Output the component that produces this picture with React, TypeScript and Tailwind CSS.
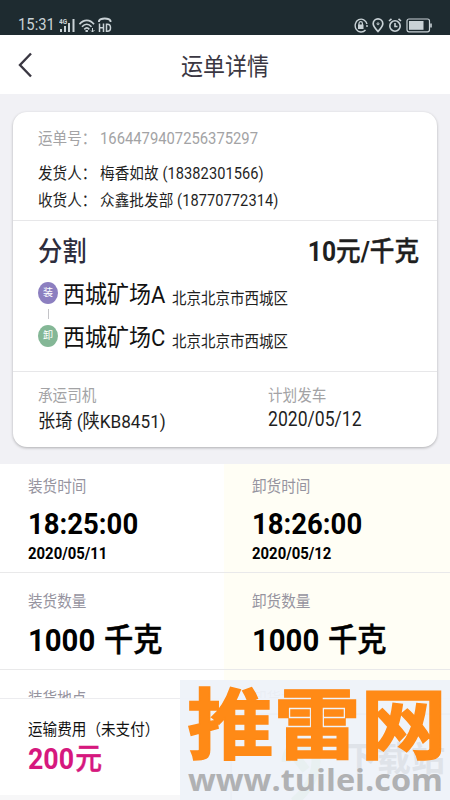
import { ReactNode } from 'react';
import clsx from 'clsx';

interface TextProps {
    className?: string;
    children: ReactNode;
}

// Text is a little taller than it is wide everywhere in this layout
const Text: React.FC<TextProps> = ({ className, children }) => (
    <span className={clsx('block origin-left scale-y-[1.1] whitespace-nowrap', className)}>
        {children}
    </span>
);

// Chinese units beside bold digits, lighter than the full bold face
const Unit: React.FC<{ children: string }> = ({ children }) => (
    <span className="font-medium [-webkit-text-stroke:0.4px_currentColor]">{children}</span>
);

interface StopProps {
    badge: string;
    badgeClass: string;
    name: string;
    address: string;
}

interface StatProps {
    label: string;
    children?: ReactNode;
    className?: string;
}

const StatusBar = () => (
    <div className="flex h-[35px] shrink-0 items-end justify-between bg-[#1e2b30] px-[18px] pb-px text-[#c9d2d6]">
        <div className="flex items-end">
            <Text className="w-[38px] text-[14.8px] leading-[17px]">15:31</Text>
            <svg className="ml-[3px]" width="17" height="16" viewBox="0 0 17 16" fill="currentColor">
                <text x="0" y="6" fontSize="6.5" fontWeight="700">4G</text>
                <rect x="1" y="11" width="2" height="3" />
                <rect x="5" y="8" width="2" height="6" />
                <rect x="9" y="5" width="2" height="9" />
                <rect x="13.5" y="1" width="2" height="13" />
            </svg>
            <svg className="ml-[2px]" width="18" height="16" viewBox="0 0 18 16" fill="none" stroke="currentColor" strokeWidth="1.7">
                <path d="M1.5 6.2C5.7 1 12 1 16 6.2" />
                <path d="M4 8.8c3-3.4 6.5-3.4 9.5 0" />
                <path d="M6.3 11.3c1.8-1.8 3.3-1.8 5 0" />
                <path d="M7.5 13h2.4" strokeWidth="2" />
                <path d="M14.5 10v4M13 12.5l1.5 1.5 2-2" strokeWidth="1" />
            </svg>
            <svg className="ml-[2px]" width="14" height="17" viewBox="0 0 14 17" fill="none" stroke="currentColor" strokeWidth="1.5">
                <path d="M1 5V3.8C2.5 .8 11 .8 12.5 3.8V5" strokeWidth="1.9" />
                <path d="M1.5 6.5v8.500M5.5 6.5v8.500M1.5 10.8h4M8.5 7.2v7.100h1c4 0 4-7.100 0-7.100z" />
            </svg>
        </div>
        <div className="flex items-end gap-[4px]">
            <svg width="14" height="17" viewBox="0 0 14 17" fill="none" stroke="currentColor" strokeWidth="1.4">
                <path d="M11.5 13A6 6.4 0 1 1 13 7M13 8v2" />
                <rect x="4" y="7.5" width="5.5" height="4.5" fill="currentColor" stroke="none" />
                <path d="M5 8V6.5a1.7 1.9 0 0 1 3.4 0V8" strokeWidth="1.2" />
            </svg>
            <svg width="12" height="17" viewBox="0 0 12 17" fill="none" stroke="currentColor" strokeWidth="1.7">
                <path d="M6 14.5C3 11.2 1.2 9.4 1.2 6.8a4.8 4.9 0 0 1 9.6 0c0 2.6-1.8 4.4-4.8 7.7z" />
                <circle cx="6" cy="6.8" r="1" strokeWidth="1" />
            </svg>
            <svg width="14" height="17" viewBox="0 0 14 17" fill="none" stroke="currentColor" strokeWidth="1.6">
                <circle cx="7" cy="9" r="5.2" />
                <path d="M7 6v3.5h2.5M1 4l2.5-2.2M13 4l-2.5-2.2" />
            </svg>
            <svg width="26" height="17" viewBox="0 0 26 17" fill="none" stroke="currentColor" strokeWidth="1.2">
                <rect x="1" y="2" width="22.5" height="12.8" rx="2" />
                <rect x="3" y="4" width="14.5" height="8.8" fill="currentColor" stroke="none" />
                <path d="M25 6.5v4" strokeWidth="1.6" />
            </svg>
        </div>
    </div>
);

const Header = () => (
    <div className="flex h-[59px] shrink-0 items-center bg-white pl-[18px] text-[#3a3742]">
        <svg width="15" height="28" viewBox="0 0 15 28" fill="none" stroke="currentColor" strokeWidth="2.4">
            <path d="M13 2.5L2 14l11 11.5" />
        </svg>
        <Text className="ml-[148px] pt-[4px] text-[22px] leading-[30px]">运单详情</Text>
    </div>
);

const Stop: React.FC<StopProps> = ({ badge, badgeClass, name, address }) => (
    <div className="flex h-[29px] items-center">
        <div className={clsx('flex h-[22px] w-5 items-center justify-center rounded-[50%] text-[10px] text-white', badgeClass)}>
            {badge}
        </div>
        <Text className="ml-[5px] w-[104px] pt-[3px] text-[22px] leading-[29px] text-[#111]">{name}</Text>
        <Text className="ml-[5px] pt-[12px] text-[14.5px] leading-[20px] text-[#222]">{address}</Text>
    </div>
);

const WaybillCard = () => (
    <div className="mx-[13px] mt-[18px] h-[335px] shrink-0 rounded-[14px] bg-white text-[14.6px] text-[#1f1f1f] shadow-[0_1px_3px_rgba(0,0,0,0.28)]">
        <div className="h-[109px] border-b border-[#e7e7e9] pt-[16px] pl-[25px] leading-[20px]">
            <div className="flex text-[#a3a3a5]">
                <Text className="w-[62px]">运单号：</Text>
                <Text className="text-[14.8px]">1664479407256375297</Text>
            </div>
            <div className="mt-[15px] flex">
                <Text className="w-[62px]">发货人：</Text>
                <Text className="tracking-[0.08px]">梅香如故 (18382301566)</Text>
            </div>
            <div className="mt-[7px] flex">
                <Text className="w-[62px]">收货人：</Text>
                <Text className="tracking-[0.08px]">众鑫批发部 (18770772314)</Text>
            </div>
        </div>
        <div className="h-[151px] border-b border-[#e7e7e9] pt-[14px] pr-[18px] pl-[25px]">
            <div className="flex justify-between text-[24.3px] leading-[34px]">
                <Text className="font-medium text-[#2d2d3d]">分割</Text>
                <Text className="text-[24.6px] font-bold">
                    10<Unit>元</Unit>/<Unit>千克</Unit>
                </Text>
            </div>
            <div className="mt-[9px]">
                <Stop badge="装" badgeClass="bg-[#8c7fc0]" name="西城矿场A" address="北京北京市西城区" />
                <div className="my-[2px] ml-[10px] h-[10px] w-px bg-[#c4c4c8]" />
                <Stop badge="卸" badgeClass="bg-[#84b796]" name="西城矿场C" address="北京北京市西城区" />
            </div>
        </div>
        <div className="flex pt-[13px] pl-[25px]">
            <div className="w-[230px]">
                <Text className="leading-[22px] text-[#a3a3a5]">承运司机</Text>
                <Text className="mt-[2px] text-[17.2px] leading-[24px]">张琦 (陕KB8451)</Text>
            </div>
            <div>
                <Text className="leading-[22px] text-[#a3a3a5]">计划发车</Text>
                <Text className="text-[17.6px] leading-[24px]">2020/05/12</Text>
            </div>
        </div>
    </div>
);

const Stat: React.FC<StatProps> = ({ label, children, className }) => (
    <div className={clsx('border-b border-[#e9e9ea] pl-[28px] text-black first:w-[224px] last:w-[226px]', className)}>
        <Text className="text-[14.6px] leading-[20px] text-[#96949f]">{label}</Text>
        {children}
    </div>
);

const Time: React.FC<{ time: string; date: string }> = ({ time, date }) => (
    <>
        <Text className="mt-[12px] text-[27.5px] leading-[32px] font-bold">{time}</Text>
        <Text className="mt-[3px] text-[14.9px] leading-[20px] font-bold">{date}</Text>
    </>
);

const Amount: React.FC<{ value: number }> = ({ value }) => (
    <Text className="mt-[9px] text-[29.3px] leading-[40px] font-bold">
        {value} <span className="ml-[1.5px]"><Unit>千克</Unit></span>
    </Text>
);

const Stats = () => (
    <div className="mt-[17px]">
        <div className="flex h-[109px]">
            <Stat label="装货时间" className="bg-white pt-[12px]">
                <Time time="18:25:00" date="2020/05/11" />
            </Stat>
            <Stat label="卸货时间" className="bg-[#fffef5] pt-[12px]">
                <Time time="18:26:00" date="2020/05/12" />
            </Stat>
        </div>
        <div className="flex h-[97px]">
            <Stat label="装货数量" className="bg-white pt-[18px]">
                <Amount value={1000} />
            </Stat>
            <Stat label="卸货数量" className="bg-[#fffef5] pt-[18px]">
                <Amount value={1000} />
            </Stat>
        </div>
        <div className="flex h-[130px]">
            <Stat label="装货地点" className="bg-white pt-[18px]" />
            <Stat label="卸货地点" className="bg-[#fffef5] pt-[18px]" />
        </div>
    </div>
);

const FeeBar = () => (
    <div className="absolute bottom-0 left-0 h-[102px] w-full border-t border-b-[5px] border-t-[#ececef] border-b-[#f7f7f8] bg-white pt-[20px] pl-[28px]">
        <Text className="text-[14.6px] leading-[20px] text-[#111]">运输费用（未支付）</Text>
        <Text className="mt-px text-[26.8px] leading-[38px] font-bold text-[#d6187e]">
            200<span className="ml-px"><Unit>元</Unit></span>
        </Text>
    </div>
);

// Slightly see-through, so the row below stays faintly visible
const Watermark = () => (
    <div className="absolute right-0 bottom-0 h-[120px] w-[270px] overflow-hidden bg-[#eef2f9]/95">
        <svg width="270" height="120" viewBox="0 0 270 120">
            <g fontFamily="'Noto Sans CJK SC', sans-serif">
                <path d="M51 120V34h219" fill="none" stroke="#e8ecf3" />
                <path d="M106 82c0-22 30-22 30-2 0 16-8 30-22 42M112 72l14 18" fill="none" stroke="#e8f0f1" strokeWidth="9" />
                <text x="163" y="91" fontSize="34" fontWeight="700" fill="#dfe3e9">下载站</text>
                <text transform="translate(7 73) scale(1.02 .91)" fontSize="85" fontWeight="700" fill="#ff8a16" stroke="#ff8a16" strokeWidth="1.5">
                    推雷网
                </text>
            </g>
            <text x="8" y="111" fontFamily="'Open Sans', sans-serif" fontSize="31" fontWeight="700" fill="#b0b1b3" textLength="255" lengthAdjust="spacingAndGlyphs">
                www.tuilei.com
            </text>
        </svg>
    </div>
);

const App = () => (
    <div className="relative flex h-[800px] w-[450px] flex-col overflow-hidden bg-[#f1f1f5] font-[Roboto,'Noto_Sans_CJK_SC',sans-serif]">
        <StatusBar />
        <Header />
        <WaybillCard />
        <Stats />
        <FeeBar />
        <Watermark />
    </div>
);

export default App;
